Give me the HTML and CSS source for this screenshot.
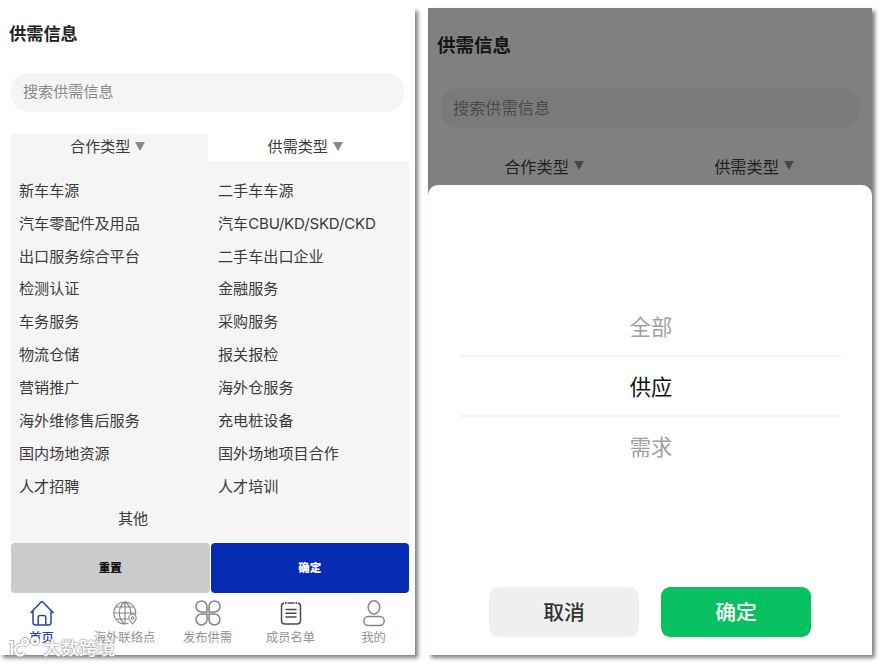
FILE: index.html
```html
<!DOCTYPE html>
<html lang="zh-CN">
<head>
   <meta charset="UTF-8">
   <meta name="viewport" content="width=device-width, initial-scale=1.0">
   <title>供需信息</title>
   <link rel="stylesheet" href="styles.css">
</head>
<body>
   <div class="screens">
      <div class="phone phone-list">
         <h1>供需信息</h1>
         <div class="search">搜索供需信息</div>
         <div class="tabs">
            <div class="tab active">合作类型<span class="arrow"></span></div>
            <div class="tab">供需类型<span class="arrow"></span></div>
         </div>
         <div class="options">
            <span>新车车源</span><span>二手车车源</span>
            <span>汽车零配件及用品</span><span>汽车<span class="latin">CBU/KD/SKD/CKD</span></span>
            <span>出口服务综合平台</span><span>二手车出口企业</span>
            <span>检测认证</span><span>金融服务</span>
            <span>车务服务</span><span>采购服务</span>
            <span>物流仓储</span><span>报关报检</span>
            <span>营销推广</span><span>海外仓服务</span>
            <span>海外维修售后服务</span><span>充电桩设备</span>
            <span>国内场地资源</span><span>国外场地项目合作</span>
            <span>人才招聘</span><span>人才培训</span>
            <span class="other">其他</span>
         </div>
         <div class="actions">
            <div class="btn reset">重置</div>
            <div class="btn confirm">确定</div>
         </div>
         <div class="nav">
            <div class="nav-item current">
               <svg width="28" height="28" viewBox="0 0 28 28">
                  <path d="M2.5 14 L12.6 3.4 Q14 2 15.4 3.4 L25.5 14 M5 12 V23.5 Q5 26 7.5 26 H20.5 Q23 26 23 23.5 V12 M10.2 26 V18.5 Q10.2 16.5 12.2 16.5 H15.8 Q17.8 16.5 17.8 18.5 V26"/>
               </svg>
               <span>首页</span>
            </div>
            <div class="nav-item">
               <svg class="thin" width="28" height="28" viewBox="0 0 28 28">
                  <path d="M17.5 24.3 A11 11 0 1 1 24.6 16 M14 2.8 V25 M3 14 H25 M5 8 H23 M5 20 H17.5 M14 2.8 C6.5 8 6.5 20 14 25 M14 2.8 C19 6.5 20.3 11 19.7 15.5"/>
                  <path d="M21.5 25 C19 22 17.8 20.5 17.8 19 A3.7 3.7 0 0 1 25.2 19 C25.2 20.5 24 22 21.5 25 Z"/>
                  <circle cx="21.5" cy="19" r="1.2"/>
               </svg>
               <span>海外联络点</span>
            </div>
            <div class="nav-item">
               <svg width="28" height="28" viewBox="0 0 28 28">
                  <path d="M13 13 H7.5 A5.5 5.5 0 1 1 13 7.5 Z M15 13 V7.5 A5.5 5.5 0 1 1 20.5 13 Z M13 15 V20.5 A5.5 5.5 0 1 1 7.5 15 Z M15 15 H20.5 A5.5 5.5 0 1 1 15 20.5 Z"/>
               </svg>
               <span>发布供需</span>
            </div>
            <div class="nav-item">
               <svg class="dark" width="28" height="28" viewBox="0 0 28 28">
                  <path d="M7 4 Q4.5 4.5 4.5 7.5 V21.5 Q4.5 25 8 25 H20 Q23.5 25 23.5 21.5 V7.5 Q23.5 4.5 21 4 M10.5 4 H17.5 M8.5 10.5 H19.5 M8.5 14.3 H19.5 M8.5 18 H19.5"/>
                  <path d="M8.7 3 V5 M19.3 3 V5"/>
               </svg>
               <span>成员名单</span>
            </div>
            <div class="nav-item">
               <svg width="28" height="28" viewBox="0 0 28 28">
                  <ellipse cx="14" cy="8.3" rx="5.8" ry="6.6"/>
                  <rect x="3.8" y="17.5" width="20.4" height="9" rx="4.5"/>
               </svg>
               <span>我的</span>
            </div>
         </div>
         <div class="watermark">
            <svg width="36" height="24" viewBox="0 0 36 24">
               <g class="wm-edge">
                  <path d="M2 7 H5 V20 M15 10.5 A5 5 0 1 0 17.5 17.5"/>
                  <circle cx="18" cy="7" r="3"/>
                  <circle cx="28" cy="6" r="3"/>
               </g>
               <g class="wm-fill">
                  <path d="M2 7 H5 V20 M15 10.5 A5 5 0 1 0 17.5 17.5"/>
                  <circle cx="18" cy="7" r="3"/>
                  <circle cx="28" cy="6" r="3"/>
               </g>
            </svg>
            <span>大数跨境</span>
         </div>
      </div>

      <div class="phone phone-picker">
         <h1>供需信息</h1>
         <div class="search">搜索供需信息</div>
         <div class="tabs">
            <div class="tab">合作类型<span class="arrow"></span></div>
            <div class="tab">供需类型<span class="arrow"></span></div>
         </div>
         <div class="sheet">
            <div class="picker">
               <div class="picker-item">全部</div>
               <div class="picker-item selected">供应</div>
               <div class="picker-item">需求</div>
            </div>
            <div class="sheet-actions">
               <div class="sheet-btn">取消</div>
               <div class="sheet-btn primary">确定</div>
            </div>
         </div>
      </div>
   </div>
</body>
</html>
```

FILE: styles.css
```css
* {
   box-sizing: border-box;
}

body {
   margin: 0;
   background: #ffffff;
   font-family: Inter, "Noto Sans CJK SC", sans-serif;
   color: #3a3a3a;
}

.screens {
   display: flex;
   gap: 13px;
   height: 665px;
   padding-top: 8px;
   overflow: hidden;
}

.phone {
   height: 647px;
   display: flex;
   flex-direction: column;
   box-shadow: 3px 3px 4px rgba(0, 0, 0, 0.5);
}

h1 {
   margin: 0;
   color: #222222;
   font-weight: 700;
}

.tabs {
   display: flex;
}

.tab {
   flex: 1;
   display: flex;
   justify-content: center;
   align-items: center;
   gap: 5px;
}

.arrow {
   border: 5px solid transparent;
   border-top: 9px solid #888888;
   border-bottom: 0;
}

/* filter list */
.phone-list {
   position: relative;
   width: 415px;
   background: #ffffff;
   clip-path: inset(0 -10px -10px 0);
}

.phone-list h1 {
   font-size: 17.2px;
   line-height: 26px;
   padding: 13px 9px 0;
}

.phone-list .search {
   height: 39px;
   margin: 26px 11px 0;
   padding-left: 12px;
   border-radius: 17px;
   background: #f5f5f5;
   color: #888888;
   font-size: 15.1px;
   line-height: 38px;
}

.phone-list .tabs {
   height: 27px;
   margin: 22px 10px 0;
   font-size: 15.1px;
   line-height: 22px;
}

.phone-list .tab {
   align-items: flex-start;
   padding: 2px 2px 0 0;
}

.phone-list .arrow {
   margin-top: 6px;
}

.phone-list .tab.active {
   background: #f5f5f5;
   border-radius: 3px 0 0 0;
}

.options {
   display: grid;
   grid-template-columns: 1fr 1fr;
   grid-auto-rows: 32.85px;
   align-items: center;
   height: 382px;
   margin: 0 6px 0 10px;
   padding: 11.5px 0 0 9px;
   background: #f5f5f5;
   font-size: 15.1px;
}

.options > span {
   white-space: nowrap;
}

.options > span:nth-child(even) {
   padding-left: 4px;
}

.options .latin {
   letter-spacing: -0.2px;
}

.options .other {
   padding-left: 99px;
}

.actions {
   display: flex;
   gap: 1px;
   height: 50px;
   margin: 0 6px 0 11px;
}

.btn {
   flex: 1;
   border-radius: 4px;
   font-size: 11.5px;
   font-weight: 900;
   line-height: 50px;
   text-align: center;
}

.reset {
   background: #cbcbcb;
   color: #111111;
}

.confirm {
   background: #052cb2;
   color: #ffffff;
}

.nav {
   display: flex;
   padding-top: 6px;
}

.nav-item {
   flex: 1;
   display: flex;
   flex-direction: column;
   align-items: center;
   color: #929292;
   font-size: 12.3px;
   line-height: 20px;
}

.nav-item svg {
   margin-bottom: 1px;
   fill: none;
   stroke: #858585;
   stroke-width: 1.5;
}

.nav-item .thin {
   stroke-width: 1.1;
}

.nav-item .dark {
   stroke: #4a4a4a;
}

.nav-item.current {
   color: #2844a8;
   font-weight: 500;
}

.nav-item.current svg {
   stroke: #2844a8;
}

.watermark {
   position: absolute;
   left: 7px;
   top: 627px;
   display: flex;
   color: #ffffff;
   font-size: 18px;
   font-weight: 500;
   line-height: 27px;
   text-shadow: 0 0 2px #888888, 0 0 2px #aaaaaa;
}

.watermark svg {
   fill: none;
}

.wm-edge {
   stroke: #aaaaaa;
   stroke-width: 4;
}

.wm-fill {
   stroke: #ffffff;
   stroke-width: 2.6;
}

/* bottom sheet picker */
.phone-picker {
   width: 444px;
   background: #808080;
   color: #202020;
}

.phone-picker h1 {
   color: #151515;
   font-size: 18.5px;
   line-height: 28px;
   padding: 23px 9px 0;
}

.phone-picker .search {
   height: 40px;
   margin: 29px 12px 0 13px;
   padding-left: 12px;
   border-radius: 17px;
   background: #7a7a7a;
   color: #4b4b4b;
   font-size: 16.2px;
   line-height: 40px;
}

.phone-picker .tabs {
   height: 57px;
   padding: 18px 13px 0 11px;
   font-size: 16.2px;
}

.phone-picker .arrow {
   border-top-color: #484848;
}

.sheet {
   flex: 1;
   display: flex;
   flex-direction: column;
   justify-content: space-between;
   padding: 112px 31px 18px;
   border-radius: 10px 10px 0 0;
   background: #ffffff;
}

.picker-item {
   height: 59px;
   padding-left: 2px;
   color: #a0a0a0;
   font-size: 21.3px;
   line-height: 60px;
   text-align: center;
}

.picker-item:first-child {
   height: 58px;
}

.picker-item.selected {
   height: 62px;
   border-top: 2px solid #f3f3f3;
   border-bottom: 2px solid #f3f3f3;
   color: #111111;
}

.sheet-actions {
   display: flex;
   justify-content: center;
   gap: 22px;
}

.sheet-btn {
   width: 150px;
   height: 50px;
   border-radius: 9px;
   background: #efefef;
   color: #333333;
   font-size: 20.8px;
   font-weight: 500;
   line-height: 52px;
   text-align: center;
}

.sheet-btn.primary {
   background: #07c160;
   color: #ffffff;
}
```
